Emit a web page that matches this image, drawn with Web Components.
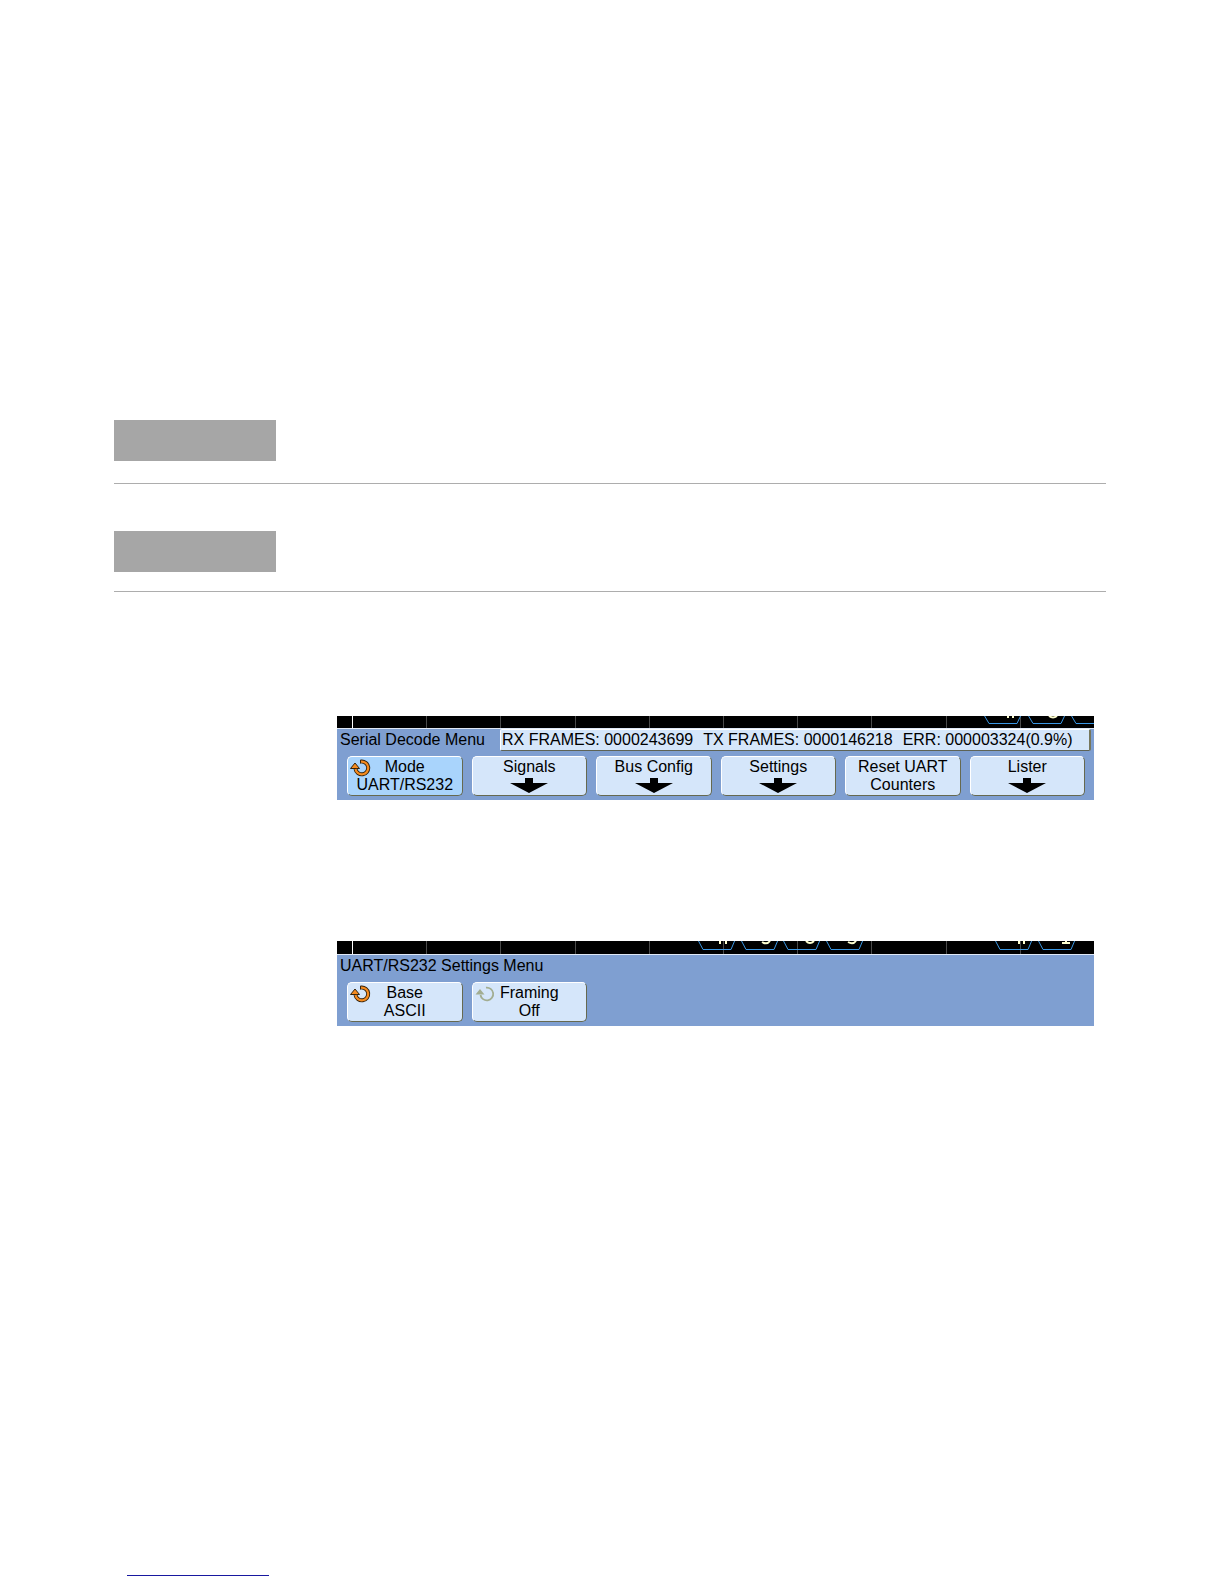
<!DOCTYPE html>
<html lang="en">
<head>
<meta charset="utf-8">
<title>Serial Decode Menu</title>
<style>
  body {
    margin: 0;
    background: #fff;
    color: #000;
    font-family: "Liberation Sans", Arial, sans-serif;
    font-size: 16px;
  }
</style>
</head>
<body>
<manual-page>
  <section-marker></section-marker>
  <section-marker compact></section-marker>

  <scope-menu slot="figures" label="Serial Decode Menu" trace="decode">
    <frame-counters slot="status">
      <span>RX FRAMES: 0000243699</span>
      <span>TX FRAMES: 0000146218</span>
      <span>ERR: 000003324(0.9%)</span>
    </frame-counters>
    <soft-key knob="on" selected>Mode<br>UART/RS232</soft-key>
    <soft-key submenu>Signals</soft-key>
    <soft-key submenu>Bus Config</soft-key>
    <soft-key submenu>Settings</soft-key>
    <soft-key>Reset UART<br>Counters</soft-key>
    <soft-key submenu>Lister</soft-key>
  </scope-menu>

  <scope-menu slot="figures" label="UART/RS232 Settings Menu" trace="settings">
    <soft-key knob="on">Base<br>ASCII</soft-key>
    <soft-key knob="off">Framing<br>Off</soft-key>
  </scope-menu>
</manual-page>

<script>
  class ManualPage extends HTMLElement {
    constructor() {
      super();
      this.attachShadow({ mode: 'open' }).innerHTML = `
        <style>
          :host {
            display: flex;
            flex-direction: column;
            box-sizing: border-box;
            min-height: 100vh;
            padding: 420px 118px 8px 114px;
          }
          .sections {
            display: grid;
            gap: 47px;
          }
          .figures {
            display: grid;
            gap: 141px;
            margin: 124px 12px 0 223px;
          }
          footer {
            margin-top: auto;
            padding-left: 13px;
          }
          a {
            display: block;
            width: 142px;
            height: 16px;
            border-bottom: 1px solid #1818a0;
          }
        </style>
        <div class="sections"><slot></slot></div>
        <div class="figures"><slot name="figures"></slot></div>
        <footer><a href="#" aria-label="Home"></a></footer>
      `;
    }
  }

  class SectionMarker extends HTMLElement {
    constructor() {
      super();
      this.attachShadow({ mode: 'open' }).innerHTML = `
        <style>
          :host {
            display: block;
            padding-bottom: 22px;
            border-bottom: 1px solid #adadad;
          }
          :host([compact]) {
            padding-bottom: 19px;
          }
          div {
            width: 162px;
            height: 41px;
            background: #a6a6a6;
          }
        </style>
        <div></div>
      `;
    }
  }

  // left edge of each bus cell, and the bright pixels that show above it
  const traces = {
    decode: {
      height: 12,
      cells: [647, 691, 734],
      marks: 'M671 0V2M676 0V2M712 0Q716 3 720 0',
      bottom: 7
    },
    settings: {
      height: 13,
      cells: [361, 404, 446, 489, 658, 701],
      marks: 'M383 0V3M389 0V3M425 1Q430 4 433 0M469 0Q473 4 477 0M511 1Q516 4 519 0M682 0V3M687 0V3M725 2H733M729 0V2',
      bottom: 8
    }
  };

  class ScopeMenu extends HTMLElement {
    constructor() {
      super();
      const trace = traces[this.getAttribute('trace')];
      const b = trace.bottom;
      let grid = '';
      for (let i = 1; i < 10; i++) {
        grid += `<path d="M${15 + Math.round(i * 74.2)}.5 0V13" stroke="#4a4a4a"/>`;
      }
      const cells = trace.cells.map(x => `<path d="M${x} -1L${x + 5} ${b}.5H${x + 33}L${x + 37} -1" stroke="#3a97e4"/>`).join('');

      this.attachShadow({ mode: 'open' }).innerHTML = `
        <style>
          :host {
            display: block;
            min-width: 0;
            background: #7f9fd1;
          }
          svg {
            display: block;
            width: 100%;
            height: ${trace.height}px;
            background: #000;
            fill: none;
            overflow: hidden;
          }
          header {
            display: flex;
            align-items: center;
            gap: 15px;
            height: 22px;
            padding: 0 3px;
            border-top: 1px solid #dfe8f6;
          }
          h2 {
            margin: 0;
            font-size: 16px;
            font-weight: normal;
            line-height: 22px;
            white-space: nowrap;
          }
          slot[name=status] {
            display: block;
            flex: 1;
          }
          .keys {
            display: grid;
            grid-template-columns: repeat(6, 1fr);
            gap: 9px;
            padding: 5px 9px 4px 10px;
          }
        </style>
        <svg viewBox="0 0 757 ${trace.height}" preserveAspectRatio="xMinYMin slice" aria-hidden="true">
          ${grid}
          <path d="M15.5 0V13" stroke="#fff"/>
          ${cells}
          <path d="${trace.marks}" stroke="#ffffd0" stroke-width="2"/>
        </svg>
        <header><h2>${this.getAttribute('label')}</h2><slot name="status"></slot></header>
        <div class="keys"><slot></slot></div>
      `;
    }
  }

  class FrameCounters extends HTMLElement {
    constructor() {
      super();
      this.attachShadow({ mode: 'open' }).innerHTML = `
        <style>
          :host {
            display: flex;
            gap: 10px;
            box-sizing: border-box;
            height: 22px;
            padding: 0 1px;
            border: 1px solid #fff;
            border-right: 2px solid #77775c;
            border-bottom-color: #5e6355;
            border-radius: 2px;
            background: #d5e6fa;
            line-height: 20px;
            white-space: nowrap;
          }
        </style>
        <slot></slot>
      `;
    }
  }

  class SoftKey extends HTMLElement {
    constructor() {
      super();
      const knob = this.getAttribute('knob');
      const ring = 'M11 2.6A6.4 6.4 0 1 1 5.5 10';
      const head = 'M0.5 9.5L5 4L9.5 9.5Z';
      const icons = {
        on: `<path d="${ring}" fill="none" stroke="#33220c" stroke-width="4"/>
             <path d="M10.5 0.8V4.6" stroke="#33220c"/>
             <path d="${head}" fill="#f68b1f" stroke="#33220c"/>
             <path d="${ring}" fill="none" stroke="#f68b1f" stroke-width="2.2"/>`,
        off: `<path d="${ring}" fill="none" stroke="#a2ad91" stroke-width="1.8"/>
              <path d="${head}" fill="#a2ad91"/>`
      };

      this.attachShadow({ mode: 'open' }).innerHTML = `
        <style>
          :host {
            display: block;
            position: relative;
            min-width: 0;
          }
          button {
            display: flex;
            flex-direction: column;
            align-items: center;
            box-sizing: border-box;
            width: 100%;
            height: 40px;
            padding: 1px 0;
            border: 1px solid;
            border-color: #fff #66694f #66694f #fff;
            border-radius: 5px;
            background: #d5e6fa;
            color: inherit;
            font: inherit;
            line-height: 18px;
            white-space: nowrap;
          }
          :host([selected]) button {
            background: #a9d4fc;
          }
          .knob {
            position: absolute;
            top: 3px;
            left: 3px;
          }
          .arrow {
            display: block;
            margin-top: 2px;
          }
        </style>
        <button type="button">
          <span><slot></slot></span>
          ${this.hasAttribute('submenu') ? '<svg class="arrow" width="38" height="15" aria-hidden="true"><path d="M15 0H23V5H38L19 15L0 5H15Z"/></svg>' : ''}
        </button>
        ${knob ? `<svg class="knob" width="21" height="18" aria-hidden="true">${icons[knob]}</svg>` : ''}
      `;
    }
  }

  customElements.define('manual-page', ManualPage);
  customElements.define('section-marker', SectionMarker);
  customElements.define('scope-menu', ScopeMenu);
  customElements.define('frame-counters', FrameCounters);
  customElements.define('soft-key', SoftKey);
</script>
</body>
</html>
